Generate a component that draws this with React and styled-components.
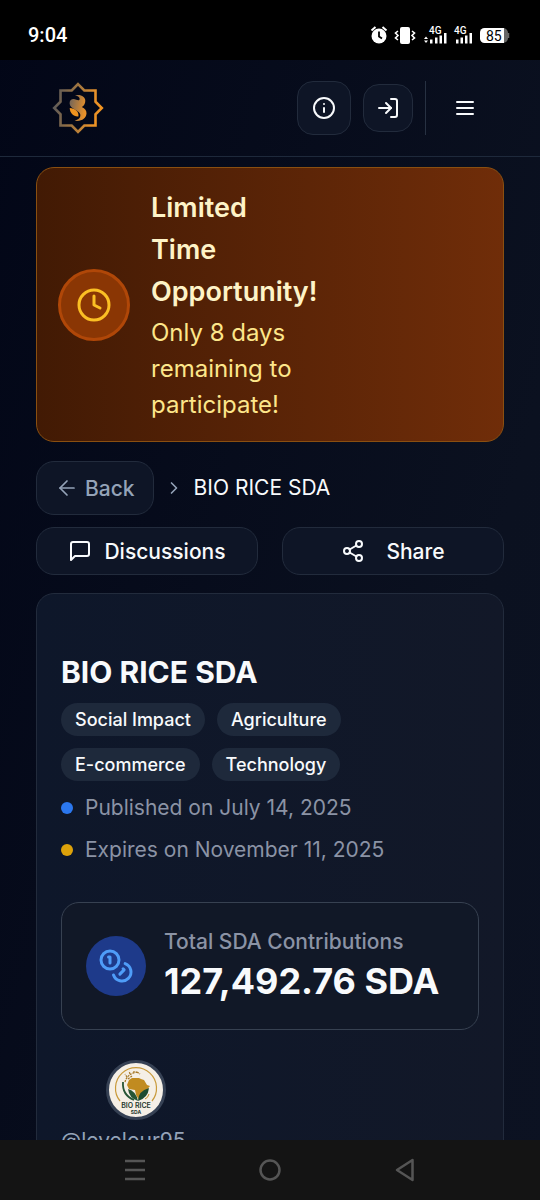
import styled, { createGlobalStyle, css } from "styled-components";
import {
  ArrowLeft,
  ChevronRight,
  Clock,
  Info,
  LogIn,
  Share2,
} from "lucide-react";

const GlobalStyle = createGlobalStyle`
*{
    box-sizing: border-box;
}
body{
    margin: 0;
    background: #020617;
    color: #f8fafc;
    font-family: Inter, "Liberation Sans", sans-serif;
}
h1,h2,p{
    margin: 0;
}
button{
    font-family: inherit;
    cursor: pointer;
}
`
const Screen = styled.div`
height: 100vh;
display: flex;
flex-direction: column;
overflow: hidden;
background: linear-gradient(105deg, #020617 0%, #0b1120 75%, #0c1222 100%);
`
const StatusBar = styled.div`
flex: none;
height: 60px;
padding: 10px 30px 0 28px;
display: flex;
align-items: center;
justify-content: space-between;
background: #000;
color: #fff;
`
const StatusTime = styled.time`
font: 500 20px/24px Roboto, "Noto Sans", sans-serif;
`
const Header = styled.header`
flex: none;
height: 97px;
padding: 0 36px 0 52px;
display: flex;
align-items: center;
justify-content: space-between;
border-bottom: 1px solid #1e293b;
`
const HomeLink = styled.a`
display: flex;
`
const HeaderActions = styled.div`
display: flex;
align-items: center;
gap: 12px;
`
const surface = css`
border: 1px solid #222b3c;
background: #0e1526;
color: #f8fafc;
`
const IconButton = styled.button`
${surface}
display: grid;
place-items: center;
width: ${( { $small } ) => $small ? "50px" : "54px"};
height: ${( { $small } ) => $small ? "48px" : "54px"};
padding: 0;
border-radius: 16px;
`
const MenuSlot = styled.div`
display: flex;
border-left: 1px solid #273142;
`
const MenuButton = styled.button`
display: grid;
place-items: center;
width: 78px;
height: 54px;
padding: 0;
border: none;
background: none;
color: #f8fafc;
`
const Main = styled.main`
flex: 1;
min-height: 0;
overflow: hidden;
padding: 10px 36px 0;
`
const Banner = styled.section`
display: flex;
align-items: center;
gap: 21px;
padding: 19px 21px 18px;
border: 1px solid #8a4f10;
border-radius: 18px;
background: linear-gradient(90deg, #421a04, #702d09);
`
const BannerIcon = styled.div`
flex: none;
display: grid;
place-items: center;
width: 72px;
height: 72px;
border: 3px solid #b04708;
border-radius: 50%;
background: #8a3604;
color: #fbbf24;
`
const BannerText = styled.div`
width: 160px;
`
const BannerTitle = styled.h2`
font-size: 27px;
font-weight: 600;
line-height: 42px;
color: #fef3c7;
`
const BannerNote = styled.p`
margin-top: 2px;
font-size: 24px;
line-height: 36px;
color: #fde68a;
`
const Breadcrumb = styled.nav`
display: flex;
align-items: center;
gap: 10px;
margin-top: 19px;
font-size: 21px;
line-height: 30px;
`
const BackButton = styled.button`
${surface}
display: flex;
align-items: center;
gap: 6px;
height: 54px;
padding: 0 18px;
border-radius: 18px;
font-size: 21px;
font-weight: 500;
color: #94a3b8;
`
const Actions = styled.div`
display: grid;
grid-template-columns: 1fr 1fr;
gap: 24px;
margin-top: 12px;
`
const ActionButton = styled.button`
${surface}
display: flex;
align-items: center;
justify-content: center;
gap: ${( { $wide } ) => $wide ? "21px" : "12px"};
height: 48px;
padding: 0;
border-radius: 18px;
font-size: 21px;
font-weight: 500;
`
const Card = styled.article`
margin-top: 18px;
padding: 58px 24px 40px;
border: 1px solid #222b3c;
border-radius: 18px;
background: linear-gradient(90deg, #0e172a, #121828);
`
const Title = styled.h1`
font-size: 30px;
font-weight: 700;
line-height: 40px;
`
const Tags = styled.ul`
display: flex;
flex-wrap: wrap;
gap: 12px;
max-width: 300px;
margin: 11px 0 12px;
padding: 0;
list-style: none;
`
const Tag = styled.li`
padding: 0 14px;
border-radius: 17px;
background: #1e293b;
font-size: 18px;
font-weight: 500;
line-height: 33px;
`
const DateRow = styled.p`
display: flex;
align-items: center;
gap: 12px;
margin-bottom: 12px;
font-size: 21px;
line-height: 30px;
color: #8b93a5;
&::before{
    content: "";
    width: 12px;
    height: 12px;
    border-radius: 50%;
    background: ${( { $dot } ) => $dot};
}
`
const Total = styled.section`
display: flex;
align-items: center;
gap: 18px;
min-height: 128px;
margin-top: 37px;
padding: 0 24px;
border: 1px solid #374151;
border-radius: 18px;
background: #111827;
`
const CoinBadge = styled.div`
flex: none;
display: grid;
place-items: center;
width: 60px;
height: 60px;
border-radius: 50%;
background: #1e3a8a;
color: #4f9df8;
`
const TotalLabel = styled.p`
font-size: 21px;
font-weight: 500;
line-height: 30px;
color: #8b93a5;
`
const TotalValue = styled.p`
font-size: 36px;
font-weight: 700;
line-height: 48px;
`
const Owner = styled.div`
display: flex;
flex-direction: column;
align-items: center;
width: 150px;
margin-top: 30px;
`
const OwnerName = styled.p`
align-self: flex-start;
margin-top: 6px;
font-size: 21px;
line-height: 30px;
color: #94a3b8;
`
const SystemNav = styled.div`
flex: none;
height: 60px;
padding: 0 111px;
display: flex;
align-items: center;
justify-content: space-between;
background: #141414;
`
const SystemButton = styled.button`
display: grid;
place-items: center;
width: 48px;
height: 48px;
padding: 0;
border: none;
background: none;
color: #555;
`

const Logo = () => (
    <svg width="52" height="52" viewBox="0 0 52 52" role="img" aria-label="Home">
        <defs>
            <linearGradient id="logo" gradientUnits="userSpaceOnUse" x1="2" y1="22" x2="50" y2="30">
                <stop offset="0" stopColor="#5d5a58" />
                <stop offset=".5" stopColor="#ac7a3c" />
                <stop offset=".8" stopColor="#e5902a" />
                <stop offset="1" stopColor="#f3941f" />
            </linearGradient>
            <linearGradient id="glyph" x1="0" y1="0" x2="1" y2=".3">
                <stop offset="0" stopColor="#6b625c" />
                <stop offset="1" stopColor="#e8912a" />
            </linearGradient>
        </defs>
        <path
            d="M26 2.2 32.3 8.5H43.5V19.7L49.8 26 43.5 32.3V43.5H32.3L26 49.8 19.7 43.5H8.5V32.3L2.2 26 8.5 19.7V8.5H19.7Z"
            fill="none"
            stroke="url(#logo)"
            strokeWidth="2.6"
        />
        <path
            d="M23 13.4C28.500 11.800 33.300 14.600 33.300 18.700C33.300 21.600 32 23.600 29.800 25C33 26.300 34.700 28.800 34.500 31.600C34.200 36.600 29 40 22.600 38.700C27 37.600 28.700 35.500 28.300 32.600C27.600 27.800 17.600 27.200 17.600 21.200C17.600 17.600 20.800 16.200 24.200 17.700C26.400 18.600 28 18.300 27.600 16.400C27.200 14.700 25.500 13.600 23 13.400Z"
            fill="url(#glyph)"
        />
        <path d="M17.700 26C22.700 26.600 27.200 29.200 26.400 34.400C21.300 34.800 18 31.200 17.700 26Z" fill="#ef931f" />
    </svg>
)
const StatusIcons = () => (
    <svg width="140" height="20" viewBox="0 0 140 20" fill="#fff" aria-hidden="true">
        <circle cx="9" cy="11" r="7.5" />
        <path d="M1.5 5.5 5.5 2M16.5 5.5 12.5 2" stroke="#fff" strokeWidth="2" />
        <path d="M9 6.5V11.5L12 13.5" fill="none" stroke="#000" strokeWidth="1.8" />
        <rect x="30" y="2" width="10" height="17" rx="2" />
        <path d="M28 6 25.5 8 28 10.5 25.5 13 28 15M42 6 44.5 8 42 10.5 44.5 13 42 15" fill="none" stroke="#fff" strokeWidth="1.6" />
        <path d="M54 14 56 11.5 58 14ZM54 15.5 56 18 58 15.5Z" />
        <path d="M60 14.5h2.5v4H60zM65 12.5h2.5v6H65zM69.5 10.5H72v8h-2.5zM74 8h2.5v10.5H74zM86 14.5h2.5v4H86zM90.5 12.5H93v6h-2.5zM95 10.5h2.5v8H95zM99.5 8h2.5v10.5h-2.5z" />
        <text x="59" y="9" fontFamily="Roboto, sans-serif" fontSize="10" fontWeight="500">4G</text>
        <text x="84" y="9" fontFamily="Roboto, sans-serif" fontSize="10" fontWeight="500">4G</text>
        <rect x="112" y="3" width="26" height="15" rx="5" fill="#666" />
        <path d="M138.500 8V13" stroke="#666" strokeWidth="1.500" />
        <path d="M114.500 3H134V18H114.500A4.500 4.500 0 0 1 110 13.500V7.500A4.500 4.500 0 0 1 114.500 3Z" />
        <text x="116" y="16" fill="#000" fontFamily="Roboto, sans-serif" fontSize="14">85</text>
    </svg>
)
const MenuIcon = () => (
    <svg width="24" height="24" viewBox="0 0 24 24" stroke="currentColor" strokeWidth="2" strokeLinecap="round" aria-hidden="true">
        <path d="M4 6H20M4 12H20M4 18H20" />
    </svg>
)
const ChatIcon = () => (
    <svg width="24" height="24" viewBox="0 0 24 24" fill="none" stroke="currentColor" strokeWidth="2" strokeLinecap="round" strokeLinejoin="round" aria-hidden="true">
        <path d="M21 15a2 2 0 0 1-2 2H7l-4 4V5a2 2 0 0 1 2-2h14a2 2 0 0 1 2 2z" />
    </svg>
)
const Coins = () => (
    <svg width="36" height="36" viewBox="0 0 24 24" fill="none" stroke="currentColor" strokeWidth="2" strokeLinecap="round" strokeLinejoin="round" aria-hidden="true">
        <circle cx="8" cy="8" r="6" />
        <path d="M18.09 10.37A6 6 0 1 1 10.34 18" />
        <path d="M7 6h1v4" />
        <path d="m16.71 13.88.7.71-2.82 2.82" />
    </svg>
)
const Avatar = () => (
    <svg width="60" height="60" viewBox="0 0 60 60" role="img" aria-label="Bio Rice SDA">
        <circle cx="30" cy="30" r="28.5" fill="#f5efe6" stroke="#364154" strokeWidth="3" />
        <path d="M14 41A20.5 20.5 0 1 1 46 41" fill="none" stroke="#c99a3b" strokeWidth="1.2" />
        <path d="M23 20 26 18 33 18 35 19 38 20 41 25 44 26 39 32 37 37 33 40 30 35 29 30 23 29 21 25Z" fill="#c18b20" />
        <path d="M19 22Q21 14 31 12M21 17 19 14M24 14 23 11M28 13 28 10M22 19 26 16M31 12 34 14" fill="none" stroke="#a77a2b" strokeWidth="1.3" strokeDasharray="2 1" />
        <path d="M32 41Q23 38 22 29Q30 31 32 41Z" fill="#275536" />
        <path d="M32 41Q32 31 43 28Q42 38 32 41Z" fill="#1d4b31" />
        <path d="M17 22Q16 35 28 40" fill="none" stroke="#275536" strokeWidth="1.8" />
        <path d="M43 34Q42 38 39 39" fill="none" stroke="#c18b20" strokeWidth="1" />
        <text x="30" y="48" textAnchor="middle" fontFamily="Inter, sans-serif" fontSize="7" fontWeight="600" fill="#26392d">BIO RICE</text>
        <text x="30" y="54" textAnchor="middle" fontFamily="Inter, sans-serif" fontSize="5" fontWeight="700" fill="#26392d">SDA</text>
    </svg>
)
const tags = ["Social Impact", "Agriculture", "E-commerce", "Technology"]

const App = () => {
    return (
        <>
            <GlobalStyle />
            <Screen>
                <StatusBar>
                    <StatusTime>9:04</StatusTime>
                    <StatusIcons />
                </StatusBar>
                <Header>
                    <HomeLink href="#"><Logo /></HomeLink>
                    <HeaderActions>
                        <IconButton aria-label="Information"><Info size={24} /></IconButton>
                        <IconButton $small aria-label="Log in"><LogIn size={24} /></IconButton>
                        <MenuSlot>
                            <MenuButton aria-label="Menu"><MenuIcon /></MenuButton>
                        </MenuSlot>
                    </HeaderActions>
                </Header>
                <Main>
                    <Banner>
                        <BannerIcon><Clock size={36} /></BannerIcon>
                        <BannerText>
                            <BannerTitle>Limited Time Opportunity!</BannerTitle>
                            <BannerNote>Only 8 days remaining to participate!</BannerNote>
                        </BannerText>
                    </Banner>
                    <Breadcrumb aria-label="Breadcrumb">
                        <BackButton><ArrowLeft size={24} strokeWidth={1.7} />Back</BackButton>
                        <ChevronRight size={20} color="#94a3b8" />
                        <span>BIO RICE SDA</span>
                    </Breadcrumb>
                    <Actions>
                        <ActionButton><ChatIcon />Discussions</ActionButton>
                        <ActionButton $wide><Share2 size={24} />Share</ActionButton>
                    </Actions>
                    <Card>
                        <Title>BIO RICE SDA</Title>
                        <Tags>
                            {tags.map( ( tag ) => <Tag key={tag}>{tag}</Tag> )}
                        </Tags>
                        <DateRow $dot="#2b77ee">Published on July 14, 2025</DateRow>
                        <DateRow $dot="#dda20a">Expires on November 11, 2025</DateRow>
                        <Total>
                            <CoinBadge><Coins /></CoinBadge>
                            <div>
                                <TotalLabel>Total SDA Contributions</TotalLabel>
                                <TotalValue>127,492.76 SDA</TotalValue>
                            </div>
                        </Total>
                        <Owner>
                            <Avatar />
                            <OwnerName>@levelour95</OwnerName>
                        </Owner>
                    </Card>
                </Main>
                <SystemNav>
                    <SystemButton aria-label="Recent apps">
                        <svg width="24" height="24" viewBox="0 0 24 24" stroke="currentColor" strokeWidth="2.5">
                            <path d="M2 3H22M2 12H22M2 21H22" />
                        </svg>
                    </SystemButton>
                    <SystemButton aria-label="Home">
                        <svg width="24" height="24" viewBox="0 0 24 24" fill="none" stroke="currentColor" strokeWidth="2.5">
                            <circle cx="12" cy="12" r="9.5" />
                        </svg>
                    </SystemButton>
                    <SystemButton aria-label="Back">
                        <svg width="24" height="24" viewBox="0 0 24 24" fill="none" stroke="currentColor" strokeWidth="2.5" strokeLinejoin="round">
                            <path d="M19.5 2V22L4 12Z" />
                        </svg>
                    </SystemButton>
                </SystemNav>
            </Screen>
        </>
    )
}
export default App;
